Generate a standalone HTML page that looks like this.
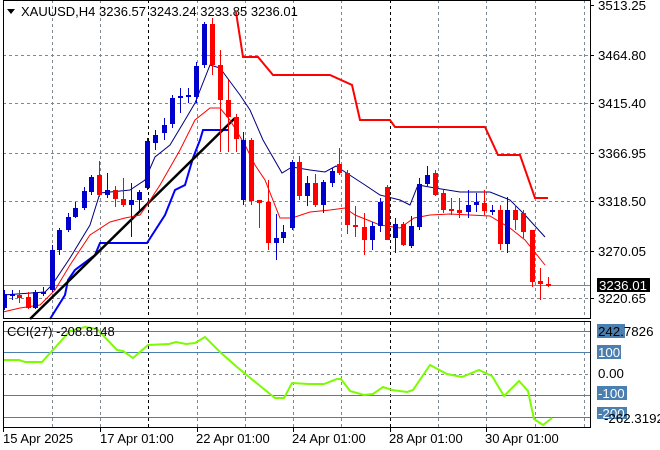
<!DOCTYPE html>
<html><head><meta charset="utf-8"><style>
html,body{margin:0;padding:0;background:#fff;}
svg{display:block;font-family:"Liberation Sans",sans-serif;font-size:12.5px;}
.ax{font-size:13.3px;}
</style></head><body>
<svg width="660" height="450" xmlns="http://www.w3.org/2000/svg">
<rect width="660" height="450" fill="#fff"/>
<g stroke="#808890" stroke-dasharray="3,3" stroke-width="1">
<line x1="3" y1="55.5" x2="590" y2="55.5"/><line x1="3" y1="103.5" x2="590" y2="103.5"/>
<line x1="3" y1="153.5" x2="590" y2="153.5"/><line x1="3" y1="201.5" x2="590" y2="201.5"/>
<line x1="3" y1="251.5" x2="590" y2="251.5"/><line x1="3" y1="298.5" x2="590" y2="298.5"/>
<line x1="3" y1="374.5" x2="590" y2="374.5"/>
</g>
<g stroke="#808890" stroke-dasharray="3,3">
<line x1="52.5" y1="0" x2="52.5" y2="319"/><line x1="100.5" y1="0" x2="100.5" y2="319"/><line x1="197.5" y1="0" x2="197.5" y2="319"/><line x1="245.5" y1="0" x2="245.5" y2="319"/><line x1="293.5" y1="0" x2="293.5" y2="319"/><line x1="341.5" y1="0" x2="341.5" y2="319"/><line x1="438.5" y1="0" x2="438.5" y2="319"/><line x1="486.5" y1="0" x2="486.5" y2="319"/><line x1="535.5" y1="0" x2="535.5" y2="319"/><line x1="584.5" y1="0" x2="584.5" y2="319"/>
<line x1="52.5" y1="322" x2="52.5" y2="428"/><line x1="100.5" y1="322" x2="100.5" y2="428"/><line x1="197.5" y1="322" x2="197.5" y2="428"/><line x1="245.5" y1="322" x2="245.5" y2="428"/><line x1="293.5" y1="322" x2="293.5" y2="428"/><line x1="341.5" y1="322" x2="341.5" y2="428"/><line x1="438.5" y1="322" x2="438.5" y2="428"/><line x1="486.5" y1="322" x2="486.5" y2="428"/><line x1="535.5" y1="322" x2="535.5" y2="428"/><line x1="584.5" y1="322" x2="584.5" y2="428"/>
</g>
<g stroke="#000" stroke-dasharray="3,3">
<line x1="148.5" y1="0" x2="148.5" y2="319"/><line x1="390.5" y1="0" x2="390.5" y2="319"/>
<line x1="148.5" y1="322" x2="148.5" y2="428"/><line x1="390.5" y1="322" x2="390.5" y2="428"/>
</g>
<line x1="3" y1="285.5" x2="590" y2="285.5" stroke="#7a8590"/>
<g stroke="#4a7fb0"><line x1="3" y1="331.5" x2="590" y2="331.5"/><line x1="3" y1="352.5" x2="590" y2="352.5"/><line x1="3" y1="395.5" x2="590" y2="395.5"/><line x1="3" y1="417.5" x2="590" y2="417.5"/></g>
<polyline fill="none" stroke="#ff0000" stroke-width="2" points="236,12 243,57 258,57 273,75 330,75 352,85 360,120 390,120 395,127 485,127 498,155 520,155 535,198 548,198"/>
<polyline fill="none" stroke="#0000ff" stroke-width="2" points="50,319 65,295 68,280 75,270 95,255 100,243 147,243 165,215 175,190 185,185 193,158 200,140 203,130 228,130"/>
<line x1="30" y1="319" x2="235" y2="118" stroke="#000" stroke-width="2.5"/>
<polyline fill="none" stroke="#000080" stroke-width="1" points="3,295 45,292 52,285 70,258 90,225 100,193 130,190 145,180 155,157 170,145 185,120 195,103 210,65 220,68 240,95 250,110 263,140 282,173 292,167 310,170 325,172 336,166 345,172 365,185 380,195 400,200 410,205 418,185 435,188 460,192 490,192 510,200 525,215 545,237"/>
<polyline fill="none" stroke="#ff0000" stroke-width="1" points="3,312 20,308 40,305 55,290 70,265 90,235 110,222 125,218 140,215 147,205 160,185 180,150 195,120 210,108 220,108 230,120 245,145 255,165 265,180 280,218 292,218 310,212 330,210 345,208 355,215 380,225 400,228 414,218 430,215 450,214 470,215 490,216 510,228 525,240 545,265"/>
<g stroke-width="1">
<line x1="4.5" y1="290" x2="4.5" y2="310" stroke="#00c"/><rect x="3" y="294" width="4" height="14" fill="#00c"/>
<line x1="12.5" y1="290" x2="12.5" y2="300" stroke="#00c"/><rect x="10" y="294" width="5" height="2" fill="#00c"/>
<line x1="19.5" y1="290" x2="19.5" y2="303" stroke="#f00"/><rect x="17" y="295" width="5" height="3" fill="#f00"/>
<line x1="28.5" y1="292" x2="28.5" y2="309" stroke="#f00"/><rect x="26" y="297" width="5" height="11" fill="#f00"/>
<line x1="35.5" y1="290" x2="35.5" y2="309" stroke="#00c"/><rect x="33" y="292" width="5" height="16" fill="#00c"/>
<line x1="43.5" y1="287" x2="43.5" y2="296" stroke="#00c"/><rect x="41" y="292" width="5" height="2" fill="#00c"/>
<line x1="52.5" y1="245" x2="52.5" y2="292" stroke="#00c"/><rect x="50" y="250" width="5" height="40" fill="#00c"/>
<line x1="59.5" y1="228" x2="59.5" y2="255" stroke="#00c"/><rect x="57" y="230" width="5" height="20" fill="#00c"/>
<line x1="68.5" y1="213" x2="68.5" y2="232" stroke="#00c"/><rect x="66" y="217" width="5" height="13" fill="#00c"/>
<line x1="75.5" y1="202" x2="75.5" y2="218" stroke="#00c"/><rect x="73" y="208" width="5" height="9" fill="#00c"/>
<line x1="84.5" y1="187" x2="84.5" y2="210" stroke="#00c"/><rect x="82" y="191" width="5" height="17" fill="#00c"/>
<line x1="91.5" y1="175" x2="91.5" y2="195" stroke="#00c"/><rect x="89" y="177" width="5" height="15" fill="#00c"/>
<line x1="99.5" y1="161" x2="99.5" y2="197" stroke="#f00"/><rect x="97" y="175" width="5" height="20" fill="#f00"/>
<line x1="107.5" y1="173" x2="107.5" y2="198" stroke="#00c"/><rect x="105" y="190" width="5" height="5" fill="#00c"/>
<line x1="115.5" y1="186" x2="115.5" y2="207" stroke="#f00"/><rect x="113" y="190" width="5" height="9" fill="#f00"/>
<line x1="123.5" y1="178" x2="123.5" y2="207" stroke="#f00"/><rect x="121" y="199" width="5" height="6" fill="#f00"/>
<line x1="131.5" y1="183" x2="131.5" y2="237" stroke="#00c"/><rect x="129" y="200" width="5" height="5" fill="#00c"/>
<line x1="139.5" y1="190" x2="139.5" y2="210" stroke="#00c"/><rect x="137" y="192" width="5" height="8" fill="#00c"/>
<line x1="147.5" y1="138" x2="147.5" y2="190" stroke="#00c"/><rect x="145" y="141" width="5" height="47" fill="#00c"/>
<line x1="155.5" y1="130" x2="155.5" y2="150" stroke="#00c"/><rect x="153" y="135" width="5" height="8" fill="#00c"/>
<line x1="164.5" y1="118" x2="164.5" y2="140" stroke="#00c"/><rect x="162" y="125" width="5" height="8" fill="#00c"/>
<line x1="172.5" y1="95" x2="172.5" y2="128" stroke="#00c"/><rect x="170" y="98" width="5" height="26" fill="#00c"/>
<line x1="180.5" y1="88" x2="180.5" y2="113" stroke="#00c"/><rect x="178" y="96" width="5" height="2" fill="#00c"/>
<line x1="188.5" y1="88" x2="188.5" y2="103" stroke="#00c"/><rect x="186" y="95" width="5" height="2" fill="#00c"/>
<line x1="196.5" y1="62" x2="196.5" y2="103" stroke="#00c"/><rect x="194" y="66" width="5" height="31" fill="#00c"/>
<line x1="204.5" y1="22" x2="204.5" y2="68" stroke="#00c"/><rect x="202" y="24" width="5" height="41" fill="#00c"/>
<line x1="212.5" y1="18" x2="212.5" y2="75" stroke="#f00"/><rect x="210" y="24" width="5" height="41" fill="#f00"/>
<line x1="220.5" y1="50" x2="220.5" y2="152" stroke="#f00"/><rect x="218" y="65" width="5" height="35" fill="#f00"/>
<line x1="228.5" y1="80" x2="228.5" y2="152" stroke="#f00"/><rect x="226" y="100" width="5" height="17" fill="#f00"/>
<line x1="236.5" y1="114" x2="236.5" y2="152" stroke="#f00"/><rect x="234" y="117" width="5" height="22" fill="#f00"/>
<line x1="243.5" y1="132" x2="243.5" y2="205" stroke="#00c"/><rect x="241" y="140" width="5" height="60" fill="#00c"/>
<line x1="251.5" y1="138" x2="251.5" y2="205" stroke="#f00"/><rect x="249" y="140" width="5" height="61" fill="#f00"/>
<line x1="259.5" y1="201" x2="259.5" y2="228" stroke="#f00"/><rect x="257" y="200" width="5" height="3" fill="#f00"/>
<line x1="268.5" y1="180" x2="268.5" y2="250" stroke="#f00"/><rect x="266" y="202" width="5" height="41" fill="#f00"/>
<line x1="276.5" y1="214" x2="276.5" y2="260" stroke="#00c"/><rect x="274" y="238" width="5" height="5" fill="#00c"/>
<line x1="283.5" y1="225" x2="283.5" y2="243" stroke="#00c"/><rect x="281" y="232" width="5" height="6" fill="#00c"/>
<line x1="292.5" y1="160" x2="292.5" y2="230" stroke="#00c"/><rect x="290" y="162" width="5" height="66" fill="#00c"/>
<line x1="299.5" y1="156" x2="299.5" y2="200" stroke="#f00"/><rect x="297" y="162" width="5" height="34" fill="#f00"/>
<line x1="307.5" y1="176" x2="307.5" y2="206" stroke="#00c"/><rect x="305" y="183" width="5" height="13" fill="#00c"/>
<line x1="315.5" y1="174" x2="315.5" y2="207" stroke="#f00"/><rect x="313" y="183" width="5" height="22" fill="#f00"/>
<line x1="323.5" y1="180" x2="323.5" y2="213" stroke="#00c"/><rect x="321" y="182" width="5" height="23" fill="#00c"/>
<line x1="332.5" y1="168" x2="332.5" y2="187" stroke="#00c"/><rect x="330" y="171" width="5" height="12" fill="#00c"/>
<line x1="339.5" y1="148" x2="339.5" y2="175" stroke="#f00"/><rect x="337" y="164" width="5" height="9" fill="#f00"/>
<line x1="347.5" y1="170" x2="347.5" y2="234" stroke="#f00"/><rect x="345" y="173" width="5" height="52" fill="#f00"/>
<line x1="355.5" y1="206" x2="355.5" y2="237" stroke="#f00"/><rect x="353" y="225" width="5" height="2" fill="#f00"/>
<line x1="364.5" y1="213" x2="364.5" y2="255" stroke="#f00"/><rect x="362" y="227" width="5" height="13" fill="#f00"/>
<line x1="372.5" y1="222" x2="372.5" y2="250" stroke="#00c"/><rect x="370" y="226" width="5" height="14" fill="#00c"/>
<line x1="380.5" y1="198" x2="380.5" y2="232" stroke="#00c"/><rect x="378" y="202" width="5" height="24" fill="#00c"/>
<line x1="387.5" y1="185" x2="387.5" y2="240" stroke="#f00"/><rect x="385" y="187" width="5" height="53" fill="#f00"/>
<line x1="395.5" y1="218" x2="395.5" y2="253" stroke="#00c"/><rect x="393" y="224" width="5" height="14" fill="#00c"/>
<line x1="403.5" y1="222" x2="403.5" y2="246" stroke="#f00"/><rect x="401" y="224" width="5" height="21" fill="#f00"/>
<line x1="411.5" y1="216" x2="411.5" y2="248" stroke="#00c"/><rect x="409" y="226" width="5" height="20" fill="#00c"/>
<line x1="419.5" y1="178" x2="419.5" y2="230" stroke="#00c"/><rect x="417" y="184" width="5" height="43" fill="#00c"/>
<line x1="427.5" y1="166" x2="427.5" y2="186" stroke="#00c"/><rect x="425" y="175" width="5" height="9" fill="#00c"/>
<line x1="435.5" y1="170" x2="435.5" y2="196" stroke="#f00"/><rect x="433" y="173" width="5" height="22" fill="#f00"/>
<line x1="443.5" y1="190" x2="443.5" y2="213" stroke="#f00"/><rect x="441" y="193" width="5" height="17" fill="#f00"/>
<line x1="451.5" y1="198" x2="451.5" y2="215" stroke="#f00"/><rect x="449" y="209" width="5" height="2" fill="#f00"/>
<line x1="459.5" y1="198" x2="459.5" y2="218" stroke="#f00"/><rect x="457" y="210" width="5" height="3" fill="#f00"/>
<line x1="468.5" y1="190" x2="468.5" y2="218" stroke="#00c"/><rect x="466" y="205" width="5" height="7" fill="#00c"/>
<line x1="476.5" y1="193" x2="476.5" y2="212" stroke="#00c"/><rect x="474" y="202" width="5" height="3" fill="#00c"/>
<line x1="484.5" y1="190" x2="484.5" y2="215" stroke="#f00"/><rect x="482" y="203" width="5" height="8" fill="#f00"/>
<line x1="492.5" y1="205" x2="492.5" y2="215" stroke="#00c"/><rect x="490" y="210" width="5" height="2" fill="#00c"/>
<line x1="500.5" y1="205" x2="500.5" y2="250" stroke="#f00"/><rect x="498" y="210" width="5" height="34" fill="#f00"/>
<line x1="507.5" y1="197" x2="507.5" y2="253" stroke="#00c"/><rect x="505" y="210" width="5" height="34" fill="#00c"/>
<line x1="515.5" y1="205" x2="515.5" y2="230" stroke="#f00"/><rect x="513" y="210" width="5" height="10" fill="#f00"/>
<line x1="523.5" y1="210" x2="523.5" y2="238" stroke="#f00"/><rect x="521" y="213" width="5" height="19" fill="#f00"/>
<line x1="532.5" y1="230" x2="532.5" y2="287" stroke="#f00"/><rect x="530" y="230" width="5" height="52" fill="#f00"/>
<line x1="540.5" y1="268" x2="540.5" y2="300" stroke="#f00"/><rect x="538" y="281" width="5" height="3" fill="#f00"/>
<line x1="548.5" y1="277" x2="548.5" y2="287" stroke="#f00"/><rect x="546" y="284" width="5" height="2" fill="#f00"/>
</g>
<polyline fill="none" stroke="#7cfc00" stroke-width="2" points="3,360 19,360 25,362 42,362 70,331 85,327 97,329 117,350 123,351 133,358 148,345 169,344 176,342 186,344 195,343 205,337 220,352 237,367 254,381 275,398 284,398 292,383 309,384 324,384 337,379 341,379 350,391 364,395 373,394 383,387 392,390 407,392 413,390 430,365 447,374 462,377 479,370 492,376 504,396 519,381 528,391 534,419 543,425 552,418"/>
<rect x="3.5" y="0.5" width="587" height="318" fill="none" stroke="#000"/>
<rect x="3.5" y="321.5" width="587" height="106" fill="none" stroke="#000"/>
<g stroke="#000"><line x1="590" y1="5.5" x2="594" y2="5.5"/><line x1="590" y1="55.5" x2="594" y2="55.5"/><line x1="590" y1="103.5" x2="594" y2="103.5"/><line x1="590" y1="153.5" x2="594" y2="153.5"/><line x1="590" y1="201.5" x2="594" y2="201.5"/><line x1="590" y1="251.5" x2="594" y2="251.5"/><line x1="590" y1="298.5" x2="594" y2="298.5"/>
<line x1="3.5" y1="428" x2="3.5" y2="432"/><line x1="100.5" y1="428" x2="100.5" y2="432"/><line x1="197.5" y1="428" x2="197.5" y2="432"/><line x1="293.5" y1="428" x2="293.5" y2="432"/><line x1="390.5" y1="428" x2="390.5" y2="432"/><line x1="486.5" y1="428" x2="486.5" y2="432"/></g>
<g fill="#000" class="ax">
<text x="598" y="10">3513.25</text><text x="598" y="60">3464.80</text><text x="598" y="108">3415.40</text><text x="598" y="158">3366.95</text><text x="598" y="206">3318.50</text><text x="598" y="256">3270.05</text><text x="598" y="303">3220.65</text>
</g>
<rect x="597" y="278" width="53" height="14" fill="#000"/><text class="ax" x="599" y="290" fill="#fff">3236.01</text>
<rect x="597" y="324" width="28" height="14" fill="#4a7fb0"/>
<text class="ax" x="598" y="336" fill="#000">242.7826</text>
<rect x="597" y="345" width="24" height="14" fill="#4a7fb0"/><text class="ax" x="598" y="357" fill="#fff">100</text>
<text class="ax" x="598" y="378" fill="#000">0.00</text>
<rect x="597" y="386" width="30" height="14" fill="#4a7fb0"/><text class="ax" x="598" y="398" fill="#fff">-100</text>
<rect x="597" y="407" width="30" height="12" fill="#4a7fb0"/><text class="ax" x="598" y="418" fill="#fff">-200</text>
<text class="ax" x="604" y="423" fill="#000">-262.3192</text>
<g fill="#000" style="font-size:13px"><text x="3" y="443">15 Apr 2025</text><text x="100" y="443">17 Apr 01:00</text><text x="196" y="443">22 Apr 01:00</text><text x="292" y="443">24 Apr 01:00</text><text x="389" y="443">28 Apr 01:00</text><text x="485" y="443">30 Apr 01:00</text></g>
<path d="M7 9 L15 9 L11 14 Z" fill="#000"/>
<text x="21" y="16" fill="#000" style="font-size:13px">XAUUSD,H4  3236.57 3243.24 3233.85 3236.01</text>
<text x="7" y="336" fill="#000" style="font-size:13px">CCI(27) -208.8148</text>
</svg>
</body></html>
